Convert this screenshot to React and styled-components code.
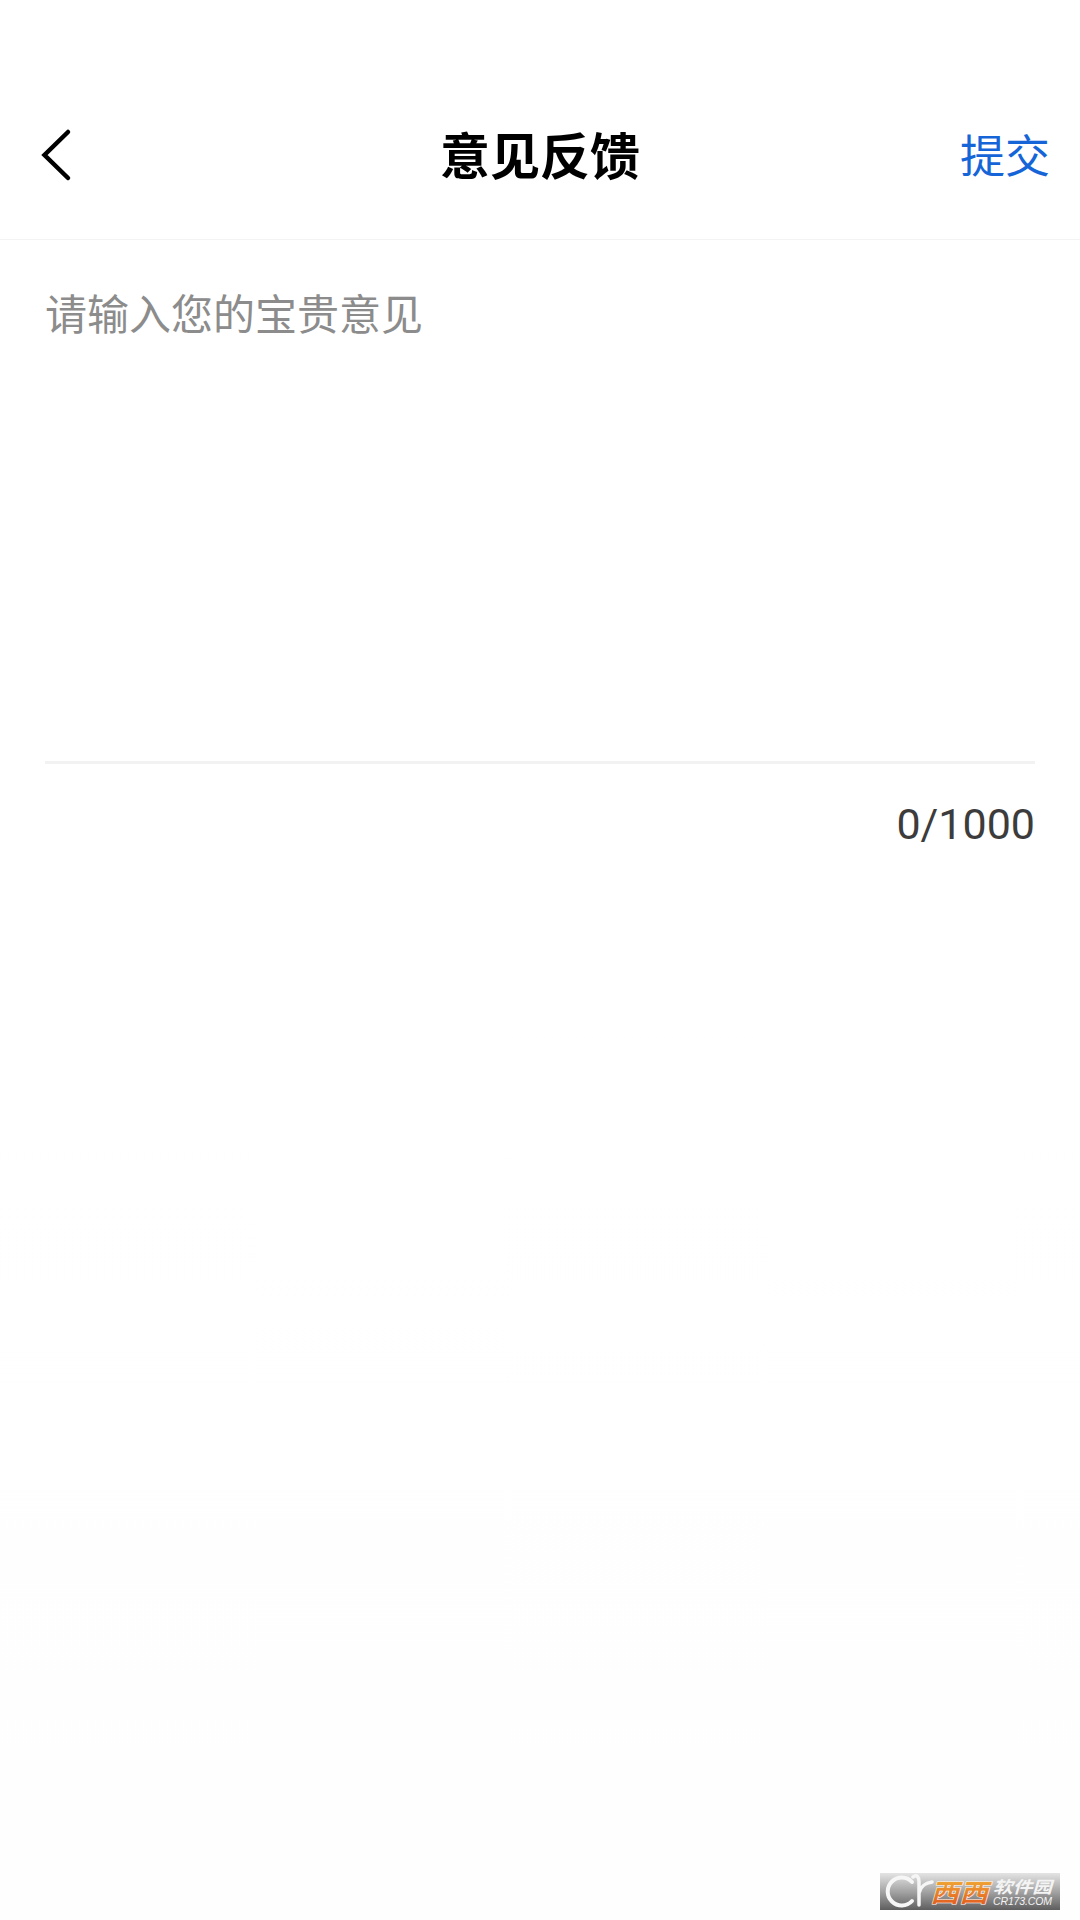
import React from "react";
import styled, { createGlobalStyle } from "styled-components";

const Global = createGlobalStyle`
  html, body { margin: 0; padding: 0; background: #fff; }
  * { box-sizing: border-box; }
`;
const CJK = `"Noto Sans CJK SC", "Noto Sans", sans-serif`;

const Page = styled.div`
  position: relative;
  width: 1080px;
  height: 1920px;
  overflow: hidden;
  background: linear-gradient(#ffffff, #ffffff 50%, #fefefe);
  font-family: ${CJK};
`;
const Header = styled.header`
  display: flex;
  align-items: center;
  justify-content: space-between;
  height: 240px;
  padding: 70px 30px 0 40px;
  border-bottom: 1px solid #f3f3f3;
`;
const BackIcon = styled.svg`
  display: block;
  width: 34px;
  height: 56px;
  fill: none;
  stroke: #000;
  stroke-width: 4.5;
  stroke-linecap: round;
  stroke-linejoin: miter;
`;
const HeaderSlot = styled.div`
  width: ${(p) => (p.$end ? "120px" : "110px")};
  display: flex;
  justify-content: ${(p) => (p.$end ? "flex-end" : "flex-start")};
`;
const Title = styled.h1`
  margin: 0 0 4px;
  font-size: 50px;
  line-height: 64px;
  font-weight: 700;
  color: #000;
`;
const Submit = styled.span`
  margin-bottom: 2px;
  font-size: 45px;
  line-height: 60px;
  color: #1565d8;
`;
const Form = styled.main`
  padding: 0 45px;
`;
const InputArea = styled.div`
  height: 524px;
  padding-top: 42px;
  border-bottom: 3px solid #f2f2f2;
  font-size: 42px;
  line-height: 60px;
  color: #8c8c8c;
`;
const Counter = styled.div`
  margin-top: 32px;
  text-align: right;
  font-family: Roboto, sans-serif;
  font-size: 43px;
  line-height: 56px;
  color: #3c3c3c;
`;
const Watermark = styled.svg`
  position: absolute;
  left: 880px;
  top: 1873px;
  width: 180px;
  height: 37px;
`;

export default function App() {
  return (
    <Page>
      <Global />
      <Header>
        <HeaderSlot>
          <BackIcon viewBox="0 0 34 56">
            <path d="M28 5 L4.5 28 L28 51" />
          </BackIcon>
        </HeaderSlot>
        <Title>意见反馈</Title>
        <HeaderSlot $end>
          <Submit>提交</Submit>
        </HeaderSlot>
      </Header>
      <Form>
        <InputArea>请输入您的宝贵意见</InputArea>
        <Counter>0/1000</Counter>
      </Form>
      <Watermark viewBox="0 0 180 37">
        <defs>
          <linearGradient id="wmBg" x1="0" y1="0" x2="0" y2="1">
            <stop offset="0" stopColor="#e4e4e4" />
            <stop offset="0.5" stopColor="#a4a4a4" />
            <stop offset="1" stopColor="#5e5e5e" />
          </linearGradient>
          <linearGradient id="wmOrange" x1="0" y1="0" x2="0" y2="1">
            <stop offset="0" stopColor="#f4bf3a" />
            <stop offset="1" stopColor="#df4f1c" />
          </linearGradient>
        </defs>
        <rect width="180" height="37" fill="url(#wmBg)" />
        <path d="M32 9 A14 14 0 1 0 32 28" fill="none" stroke="#f6f6f6" strokeWidth="4" strokeLinecap="round" />
        <path d="M33 4 C37 1 39 4 39 9 L39 32 M39 20 C41 12 46 10 52 9" fill="none" stroke="#f6f6f6" strokeWidth="3.5" strokeLinecap="round" />
        <text x="50" y="29" fontFamily='"Noto Sans CJK SC", sans-serif' fontSize="25" fontWeight="900" fontStyle="italic" fill="url(#wmOrange)" stroke="#fff" strokeWidth="0.5" textLength="58" lengthAdjust="spacingAndGlyphs">西西</text>
        <text x="113" y="19.5" fontFamily='"Noto Sans CJK SC", sans-serif' fontSize="16.5" fontWeight="700" fontStyle="italic" fill="#f4f4f4" textLength="59" lengthAdjust="spacingAndGlyphs">软件园</text>
        <text x="113" y="32" fontFamily='"Liberation Sans", sans-serif' fontSize="10.5" fontStyle="italic" fill="#f4f4f4" textLength="59" lengthAdjust="spacing">CR173.COM</text>
      </Watermark>
    </Page>
  );
}
